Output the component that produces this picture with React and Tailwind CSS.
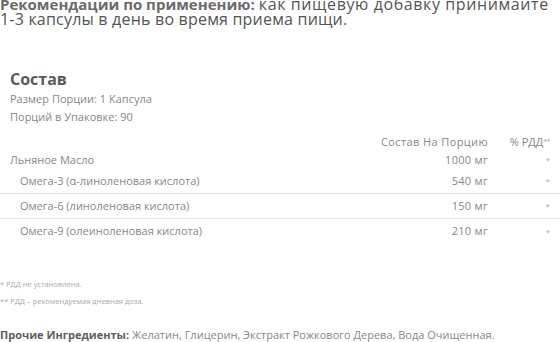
import React from "react";

const rows = [
  { name: "Льняное Масло", amount: "1000 мг", dv: "*", sub: false, border: false },
  { name: "Омега-3 (α-линоленовая кислота)", amount: "540 мг", dv: "*", sub: true, border: true },
  { name: "Омега-6 (линоленовая кислота)", amount: "150 мг", dv: "*", sub: true, border: true },
  { name: "Омега-9 (олеиноленовая кислота)", amount: "210 мг", dv: "*", sub: true, border: false },
];

export default function App() {
  return (
    <div
      className="w-[560px] h-[342px] overflow-hidden bg-white text-[#666]"
      style={{ fontFamily: "'Open Sans', sans-serif" }}
    >
      <p className="mt-[-3px] text-[16px] leading-[15px] text-[#555] whitespace-nowrap">
        <span className="text-[15px] font-bold text-[#6b6b6b]">Рекомендации по применению:</span>{" "}
        <span className="tracking-[0.6px]">как пищевую добавку принимайте</span>
        <br />
        <span className="tracking-[0.2px]">1-3 капсулы в день во время приема пищи.</span>
      </p>

      {/* Supplement facts */}
      <div className="px-[10px] pt-[42px]">
        <h3 className="text-[16px] leading-[20px] font-bold text-[#5a5a5a]">Состав</h3>
        <p className="text-[11px] leading-[18px] text-[#888] mt-[1px]">Размер Порции: 1 Капсула</p>
        <p className="text-[11px] leading-[18px] text-[#888]">Порций в Упаковке: 90</p>
      </div>

      <div className="mt-[8px] text-[11px] text-[#888]">
        <div className="flex h-[17px] items-center">
          <div className="flex-1" />
          <div className="w-[150px] text-right pr-[12px] tracking-[0.4px]">Состав На Порцию</div>
          <div className="w-[60px] text-right pr-[10px]">
            % РДД<sup className="text-[6px]">**</sup>
          </div>
        </div>
        {rows.map((r) => (
          <div
            key={r.name}
            className={`flex items-center ${r.sub ? "h-[25px]" : "h-[18px]"} ${r.border ? "border-b border-[#e6e6e6]" : ""}`}
          >
            <div className={`flex-1 ${r.sub ? "pl-[20px]" : "pl-[10px]"}`}>{r.name}</div>
            <div className="w-[150px] text-right pr-[12px] tracking-[0.3px]">{r.amount}</div>
            <div className="w-[60px] text-right pr-[10px] text-[8px] text-[#aaa]">{r.dv}</div>
          </div>
        ))}
      </div>

      {/* Footnotes */}
      <div className="mt-[32px] text-[7.5px] leading-[17px] text-[#aaa]">
        <p>* РДД не установлена.</p>
        <p>** РДД – рекомендуемая дневная доза.</p>
      </div>

      <p className="mt-[17px] text-[11px] leading-[15px] text-[#888]">
        <span className="font-bold text-[#5e5e5e]">Прочие Ингредиенты:</span> Желатин, Глицерин, Экстракт Рожкового Дерева, Вода Очищенная.
      </p>
    </div>
  );
}
